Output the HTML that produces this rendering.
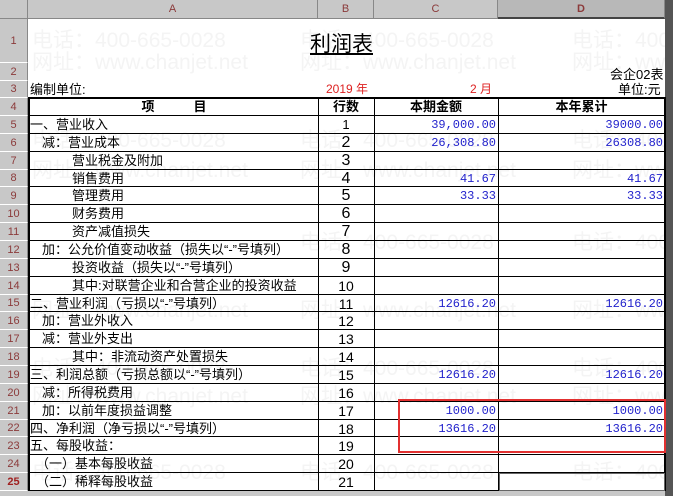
<!DOCTYPE html>
<html><head><meta charset="utf-8"><style>
*{margin:0;padding:0;box-sizing:border-box}
body{width:673px;height:496px;background:#fff;position:relative;overflow:hidden;font-family:"Liberation Sans","Noto Sans CJK SC","WenQuanYi Zen Hei",sans-serif;font-size:13px;color:#000}
.a{position:absolute;white-space:nowrap}
.hd{position:absolute;top:0;height:19px;background:#c8c8c8;border-right:1px solid #888;border-bottom:1px solid #888;color:#8b3a3a;font-size:11px;text-align:center;line-height:19px}
.rn{position:absolute;left:0;width:28px;background:#c8c8c8;border-bottom:1px solid #fff;border-right:1px solid #888;color:#8b3a3a;font-size:11px;text-align:center}
.wm{position:absolute;color:#f4f4f4;font-size:21px;white-space:nowrap}
.hl{position:absolute;left:28px;width:637px;height:1px;background:#000}
.vl{position:absolute;width:1px;background:#000}
.t{position:absolute;line-height:18px;white-space:nowrap}
.n{position:absolute;line-height:18px;text-align:right;color:#2222cc;font-family:"Liberation Mono","Noto Sans CJK SC",monospace;font-size:12px}
.c{position:absolute;left:318px;width:56px;text-align:center;line-height:18px;font-size:14px}
</style></head><body>
<div class="wm" style="left:32px;top:24px">电话：400-665-0028</div>
<div class="wm" style="left:32px;top:46px">网址：www.chanjet.net</div>
<div class="wm" style="left:300px;top:24px">电话：400-665-0028</div>
<div class="wm" style="left:300px;top:46px">网址：www.chanjet.net</div>
<div class="wm" style="left:572px;top:24px">电话：400-</div>
<div class="wm" style="left:572px;top:46px">网址：www</div>
<div class="wm" style="left:32px;top:124px">电话：400-665-0028</div>
<div class="wm" style="left:32px;top:154px">网址：www.chanjet.net</div>
<div class="wm" style="left:300px;top:124px">电话：400-665-0028</div>
<div class="wm" style="left:300px;top:154px">网址：www.chanjet.net</div>
<div class="wm" style="left:572px;top:124px">电话：400-</div>
<div class="wm" style="left:572px;top:154px">网址：www</div>
<div class="wm" style="left:300px;top:226px">电话：400-665-0028</div>
<div class="wm" style="left:572px;top:226px">电话：400-</div>
<div class="wm" style="left:32px;top:294px">网址：www.chanjet.net</div>
<div class="wm" style="left:300px;top:294px">网址：www.chanjet.net</div>
<div class="wm" style="left:572px;top:294px">网址：www</div>
<div class="wm" style="left:32px;top:352px">电话：400-665-0028</div>
<div class="wm" style="left:300px;top:352px">电话：400-665-0028</div>
<div class="wm" style="left:572px;top:352px">电话：400-</div>
<div class="wm" style="left:32px;top:380px">网址：www.chanjet.net</div>
<div class="wm" style="left:300px;top:380px">网址：www.chanjet.net</div>
<div class="wm" style="left:572px;top:380px">网址：www</div>
<div class="wm" style="left:32px;top:456px">电话：400-665-0028</div>
<div class="wm" style="left:300px;top:456px">电话：400-665-0028</div>
<div class="wm" style="left:572px;top:456px">电话：400-</div>

<div class="hd" style="left:0;width:28px"></div>
<div class="hd" style="left:28px;width:290px">A</div>
<div class="hd" style="left:318px;width:56px">B</div>
<div class="hd" style="left:374px;width:124px">C</div>
<div class="hd" style="left:498px;width:167px;background:#b8b8b8;font-weight:bold;border-bottom:2px solid #444">D</div>
<div class="a" style="left:665px;top:0;width:8px;height:496px;background:#555"></div>
<div class="a" style="left:0;top:491px;width:665px;height:5px;background:#c8c8c8"></div>

<div class="rn" style="top:19px;height:44px;line-height:44px">1</div>
<div class="rn" style="top:63px;height:18px;line-height:18px">2</div>
<div class="rn" style="top:81px;height:17px;line-height:17px">3</div>
<div class="rn" style="top:98px;height:18px;line-height:18px">4</div>
<div class="rn" style="top:116px;height:18px;line-height:18px">5</div>
<div class="rn" style="top:134px;height:18px;line-height:18px">6</div>
<div class="rn" style="top:152px;height:18px;line-height:18px">7</div>
<div class="rn" style="top:170px;height:17px;line-height:17px">8</div>
<div class="rn" style="top:187px;height:18px;line-height:18px">9</div>
<div class="rn" style="top:205px;height:18px;line-height:18px">10</div>
<div class="rn" style="top:223px;height:18px;line-height:18px">11</div>
<div class="rn" style="top:241px;height:18px;line-height:18px">12</div>
<div class="rn" style="top:259px;height:18px;line-height:18px">13</div>
<div class="rn" style="top:277px;height:18px;line-height:18px">14</div>
<div class="rn" style="top:295px;height:17px;line-height:17px">15</div>
<div class="rn" style="top:312px;height:18px;line-height:18px">16</div>
<div class="rn" style="top:330px;height:18px;line-height:18px">17</div>
<div class="rn" style="top:348px;height:18px;line-height:18px">18</div>
<div class="rn" style="top:366px;height:18px;line-height:18px">19</div>
<div class="rn" style="top:384px;height:18px;line-height:18px">20</div>
<div class="rn" style="top:402px;height:18px;line-height:18px">21</div>
<div class="rn" style="top:420px;height:17px;line-height:17px">22</div>
<div class="rn" style="top:437px;height:18px;line-height:18px">23</div>
<div class="rn" style="top:455px;height:18px;line-height:18px">24</div>
<div class="rn" style="top:473px;height:18px;line-height:18px;font-weight:bold;color:#a02020">25</div>

<div class="a" style="left:310px;top:28px;font-size:21px;text-decoration:underline">利润表</div>
<div class="a" style="left:610px;top:64px;font-size:13px">会企02表</div>
<div class="a" style="left:30px;top:81px;line-height:17px">编制单位:</div>
<div class="a" style="left:326px;top:81px;line-height:17px;color:#dd2222;font-size:12px">2019 年</div>
<div class="a" style="left:470px;top:81px;line-height:17px;color:#dd2222;font-size:12px">2 月</div>
<div class="a" style="left:618px;top:81px;line-height:17px">单位:元</div>

<div class="hl" style="top:97px;height:2px"></div>
<div class="hl" style="top:115px"></div>
<div class="hl" style="top:133px"></div>
<div class="hl" style="top:151px"></div>
<div class="hl" style="top:169px"></div>
<div class="hl" style="top:186px"></div>
<div class="hl" style="top:204px"></div>
<div class="hl" style="top:222px"></div>
<div class="hl" style="top:240px"></div>
<div class="hl" style="top:258px"></div>
<div class="hl" style="top:276px"></div>
<div class="hl" style="top:294px"></div>
<div class="hl" style="top:311px"></div>
<div class="hl" style="top:329px"></div>
<div class="hl" style="top:347px"></div>
<div class="hl" style="top:365px"></div>
<div class="hl" style="top:383px"></div>
<div class="hl" style="top:401px"></div>
<div class="hl" style="top:419px"></div>
<div class="hl" style="top:436px"></div>
<div class="hl" style="top:454px"></div>
<div class="hl" style="top:472px"></div>
<div class="hl" style="top:490px"></div>
<div class="vl" style="left:28px;top:97px;height:394px;width:2px"></div>
<div class="vl" style="left:318px;top:97px;height:394px"></div>
<div class="vl" style="left:374px;top:97px;height:394px"></div>
<div class="vl" style="left:498px;top:97px;height:394px"></div>
<div class="vl" style="left:664px;top:97px;height:394px;width:2px"></div>
<div class="a" style="left:499px;top:473px;width:166px;height:18px;border:1px solid #666"></div>

<div class="t" style="left:30px;top:98px;width:288px;text-align:center;font-weight:bold">项　　　目</div>
<div class="t" style="left:318px;top:98px;width:56px;text-align:center;font-weight:bold">行数</div>
<div class="t" style="left:374px;top:98px;width:124px;text-align:center;font-weight:bold">本期金额</div>
<div class="t" style="left:498px;top:98px;width:167px;text-align:center;font-weight:bold">本年累计</div>

<div class="t" style="left:30px;top:116px">一、营业收入</div>
<div class="t" style="left:42px;top:134px">减：营业成本</div>
<div class="t" style="left:72px;top:152px">营业税金及附加</div>
<div class="t" style="left:72px;top:170px">销售费用</div>
<div class="t" style="left:72px;top:187px">管理费用</div>
<div class="t" style="left:72px;top:205px">财务费用</div>
<div class="t" style="left:72px;top:223px">资产减值损失</div>
<div class="t" style="left:42px;top:241px">加：公允价值变动收益（损失以“-”号填列）</div>
<div class="t" style="left:72px;top:259px">投资收益（损失以“-”号填列）</div>
<div class="t" style="left:72px;top:277px">其中:对联营企业和合营企业的投资收益</div>
<div class="t" style="left:30px;top:295px">二、营业利润（亏损以“-”号填列）</div>
<div class="t" style="left:42px;top:312px">加：营业外收入</div>
<div class="t" style="left:42px;top:330px">减：营业外支出</div>
<div class="t" style="left:72px;top:348px">其中：非流动资产处置损失</div>
<div class="t" style="left:30px;top:366px">三、利润总额（亏损总额以“-”号填列）</div>
<div class="t" style="left:42px;top:384px">减：所得税费用</div>
<div class="t" style="left:42px;top:402px">加：以前年度损益调整</div>
<div class="t" style="left:30px;top:420px">四、净利润（净亏损以“-”号填列）</div>
<div class="t" style="left:30px;top:437px">五、每股收益：</div>
<div class="t" style="left:36px;top:455px">（一）基本每股收益</div>
<div class="t" style="left:36px;top:473px">（二）稀释每股收益</div>

<div class="c" style="top:116px;font-size:13px">1</div>
<div class="c" style="top:134px;font-size:16px">2</div>
<div class="c" style="top:152px;font-size:16px">3</div>
<div class="c" style="top:170px;font-size:16px">4</div>
<div class="c" style="top:187px;font-size:16px">5</div>
<div class="c" style="top:205px;font-size:16px">6</div>
<div class="c" style="top:223px;font-size:16px">7</div>
<div class="c" style="top:241px;font-size:16px">8</div>
<div class="c" style="top:259px;font-size:16px">9</div>
<div class="c" style="top:277px">10</div>
<div class="c" style="top:295px">11</div>
<div class="c" style="top:312px">12</div>
<div class="c" style="top:330px">13</div>
<div class="c" style="top:348px">14</div>
<div class="c" style="top:366px">15</div>
<div class="c" style="top:384px">16</div>
<div class="c" style="top:402px">17</div>
<div class="c" style="top:420px">18</div>
<div class="c" style="top:437px">19</div>
<div class="c" style="top:455px">20</div>
<div class="c" style="top:473px">21</div>

<div class="n" style="left:374px;width:122px;top:116px">39,000.00</div>
<div class="n" style="left:498px;width:165px;top:116px">39000.00</div>
<div class="n" style="left:374px;width:122px;top:134px">26,308.80</div>
<div class="n" style="left:498px;width:165px;top:134px">26308.80</div>
<div class="n" style="left:374px;width:122px;top:170px">41.67</div>
<div class="n" style="left:498px;width:165px;top:170px">41.67</div>
<div class="n" style="left:374px;width:122px;top:187px">33.33</div>
<div class="n" style="left:498px;width:165px;top:187px">33.33</div>
<div class="n" style="left:374px;width:122px;top:295px">12616.20</div>
<div class="n" style="left:498px;width:165px;top:295px">12616.20</div>
<div class="n" style="left:374px;width:122px;top:366px">12616.20</div>
<div class="n" style="left:498px;width:165px;top:366px">12616.20</div>
<div class="n" style="left:374px;width:122px;top:402px">1000.00</div>
<div class="n" style="left:498px;width:165px;top:402px">1000.00</div>
<div class="n" style="left:374px;width:122px;top:420px">13616.20</div>
<div class="n" style="left:498px;width:165px;top:420px">13616.20</div>

<div class="a" style="left:398px;top:399px;width:268px;height:54px;border:2px solid #e23030"></div>
</body></html>
